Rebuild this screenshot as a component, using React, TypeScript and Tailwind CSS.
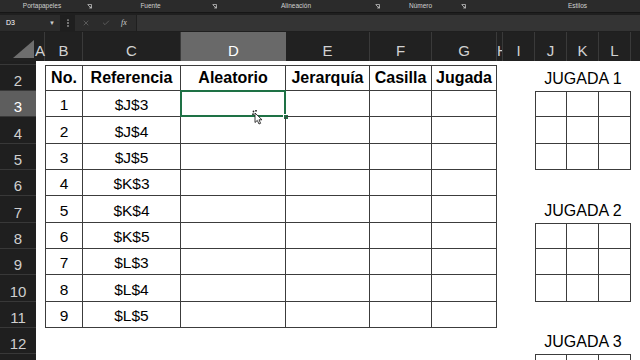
import { Check, EllipsisVertical, X } from "lucide-react";

type Col = { key: string; w: string };

const cols: Col[] = [
	{ key: "A", w: "w-[9px]" },
	{ key: "B", w: "w-[38px]" },
	{ key: "C", w: "w-[98px]" },
	{ key: "D", w: "w-[105px]" },
	{ key: "E", w: "w-[84px]" },
	{ key: "F", w: "w-[62px]" },
	{ key: "G", w: "w-[65px]" },
	{ key: "H", w: "w-[6px]" },
	{ key: "I", w: "w-[32px]" },
	{ key: "J", w: "w-[32px]" },
	{ key: "K", w: "w-[32px]" },
	{ key: "L", w: "w-[32px]" },
	{ key: "M", w: "w-[40px]" },
];

const rows = [
	{ n: 1, h: "h-[4px]" },
	{ n: 2, h: "h-[26px]" },
	{ n: 3, h: "h-[26px]" },
	{ n: 4, h: "h-[27px]" },
	{ n: 5, h: "h-[26px]" },
	{ n: 6, h: "h-[26px]" },
	{ n: 7, h: "h-[27px]" },
	{ n: 8, h: "h-[26px]" },
	{ n: 9, h: "h-[26px]" },
	{ n: 10, h: "h-[27px]" },
	{ n: 11, h: "h-[26px]" },
	{ n: 12, h: "h-[26px]" },
	{ n: 13, h: "h-[27px]" },
];

const headers: Record<string, string> = {
	B: "No.",
	C: "Referencia",
	D: "Aleatorio",
	E: "Jerarquía",
	F: "Casilla",
	G: "Jugada",
};

const refs = ["$J$3", "$J$4", "$J$5", "$K$3", "$K$4", "$K$5", "$L$3", "$L$4", "$L$5"];

const tableCols = ["B", "C", "D", "E", "F", "G"];
const gridCols = ["J", "K", "L"];
const gridRows = [3, 4, 5, 8, 9, 10, 13];
const titles: Record<number, string> = { 2: "JUGADA 1", 7: "JUGADA 2", 12: "JUGADA 3" };

function Launcher({ w }: { w: string }) {
	return (
		<div className={`${w} flex justify-center`}>
			<svg width="5" height="5" viewBox="0 0 5 5" fill="none" stroke="#bdbdbd" strokeWidth="0.8">
				<path d="M0.5 0.5h4v4" />
				<path d="M1 1l3 3M2.2 4h1.8V2.2" />
			</svg>
		</div>
	);
}

function Cursor() {
	return (
		<svg
			className="absolute left-[71px] top-[19px]"
			width="12"
			height="15"
			viewBox="0 0 12 15"
		>
			<circle cx="1.5" cy="1.5" r="0.9" fill="#222" />
			<circle cx="4" cy="0.8" r="0.9" fill="#222" />
			<circle cx="1" cy="4.2" r="0.9" fill="#222" />
			<path
				d="M3 3 L3 12.5 L5.3 10.4 L7 14 L8.6 13.3 L7 9.8 L10 9.8 Z"
				fill="#fff"
				stroke="#222"
				strokeWidth="0.9"
				strokeLinejoin="round"
			/>
		</svg>
	);
}

function Cell({ row, col }: { row: number; col: Col }) {
	const inTable = row >= 2 && row <= 11 && tableCols.includes(col.key);
	const inGrid = gridRows.includes(row) && gridCols.includes(col.key);
	let border = "";
	if (inTable || inGrid) {
		border = "border-r border-b border-[#3c3c3c]";
		if (col.key === "B" || col.key === "J") border += " border-l";
		if (row === 2 || row === 3 || row === 8 || row === 13) {
			if (inGrid || row === 2) border += " border-t";
		}
	}

	let text = "";
	let bold = false;
	if (row === 2 && headers[col.key]) {
		text = headers[col.key];
		bold = true;
	} else if (row >= 3 && row <= 11) {
		if (col.key === "B") text = String(row - 2);
		if (col.key === "C") text = refs[row - 3];
	}

	const selected = row === 3 && col.key === "D";

	return (
		<div
			className={`relative flex shrink-0 items-end justify-center pb-[4px] leading-none text-black ${col.w} ${border} ${
				bold ? "text-[16px] font-bold" : "text-[15.5px]"
			}`}
		>
			{text}
			{selected && (
				<>
					<div className="absolute -top-px -left-px -right-px -bottom-px border-2 border-[#1e7145]" />
					<div className="absolute -right-[4px] -bottom-[4px] h-[6px] w-[6px] border border-white bg-[#1e7145]" />
					<Cursor />
				</>
			)}
		</div>
	);
}

function SheetRow({ n, h }: { n: number; h: string }) {
	const title = titles[n];
	const active = n === 3;
	return (
		<div className={`flex ${h}`}>
			<div
				className={`flex w-[36px] shrink-0 items-end justify-center border-b border-[#383838] pb-[2px] text-[15px] leading-none ${
					active ? "bg-[#5e5e5e] text-white" : "bg-[#1f1f1f] text-[#cfcfcf]"
				}`}
			>
				{n > 1 ? n : ""}
			</div>
			{cols.map((col) => {
				if (title && gridCols.includes(col.key)) {
					if (col.key !== "J") return null;
					return (
						<div
							key="title"
							className="flex w-[96px] shrink-0 items-end justify-center pb-[4px] text-[16px] leading-none text-black"
						>
							{title}
						</div>
					);
				}
				return <Cell key={col.key} row={n} col={col} />;
			})}
		</div>
	);
}

export default function App() {
	return (
		<div className="h-[360px] w-[640px] overflow-hidden bg-white font-['Liberation_Sans',sans-serif]">
			{/* ribbon group labels */}
			<div className="flex h-[13px] items-center overflow-hidden border-b border-[#161616] bg-[#2b2b2b] text-[6.5px] leading-none text-[#d0d0d0]">
				<div className="w-[84px] shrink-0 text-center">Portapapeles</div>
				<Launcher w="w-[10px] shrink-0" />
				<div className="w-[113px] shrink-0 text-center">Fuente</div>
				<Launcher w="w-[15px] shrink-0" />
				<div className="w-[148px] shrink-0 text-center">Alineación</div>
				<Launcher w="w-[14px] shrink-0" />
				<div className="w-[73px] shrink-0 text-center">Número</div>
				<Launcher w="w-[12px] shrink-0" />
				<div className="w-[217px] shrink-0 text-center">Estilos</div>
			</div>

			{/* formula bar */}
			<div className="flex h-[19px] items-center bg-[#1f1f1f]">
				<div className="flex h-[16px] w-[60px] shrink-0 items-center justify-between bg-[#2c2c2c] pl-[6px] pr-[5px] text-[7px] leading-none text-white">
					<span>D3</span>
					<span className="text-[6px] text-[#cfcfcf]">▼</span>
				</div>
				<div className="flex w-[15px] shrink-0 justify-center text-[#9a9a9a]">
					<EllipsisVertical size={10} strokeWidth={2.5} />
				</div>
				<div className="flex h-[16px] w-[61px] shrink-0 items-center bg-[#2c2c2c] pl-[1px]">
					<div className="flex w-[20px] justify-center text-[#6f6f6f]">
						<X size={8} strokeWidth={2} />
					</div>
					<div className="flex w-[20px] justify-center text-[#6f6f6f]">
						<Check size={8} strokeWidth={2} />
					</div>
					<div className="flex w-[16px] justify-center font-['Liberation_Serif',serif] text-[8px] italic leading-none text-[#cfcfcf]">
						fx
					</div>
				</div>
				<div className="ml-[1px] h-[16px] flex-1 bg-[#343434]" />
			</div>

			{/* column headers */}
			<div className="flex h-[29px] bg-[#212121]">
				<div className="flex w-[36px] shrink-0 items-end justify-end pb-[3px] pr-[2px]">
					<svg width="21" height="18" viewBox="0 0 21 18">
						<path d="M21 0 L21 18 L0 18 Z" fill="#6e6e6e" />
					</svg>
				</div>
				{cols.map((col) => (
					<div
						key={col.key}
						className={`flex shrink-0 items-end pb-[3px] text-[15px] leading-none ${col.w} ${
							col.key === "H" ? "justify-start overflow-hidden" : "justify-center"
						} ${
							col.key === "D"
								? "bg-[#696969] text-white"
								: "border-r border-[#3a3a3a] text-[#d2d2d2]"
						}`}
					>
						{col.key}
					</div>
				))}
			</div>

			{/* sheet body */}
			<div className="flex flex-col">
				{rows.map((r) => (
					<SheetRow key={r.n} n={r.n} h={r.h} />
				))}
			</div>
		</div>
	);
}
